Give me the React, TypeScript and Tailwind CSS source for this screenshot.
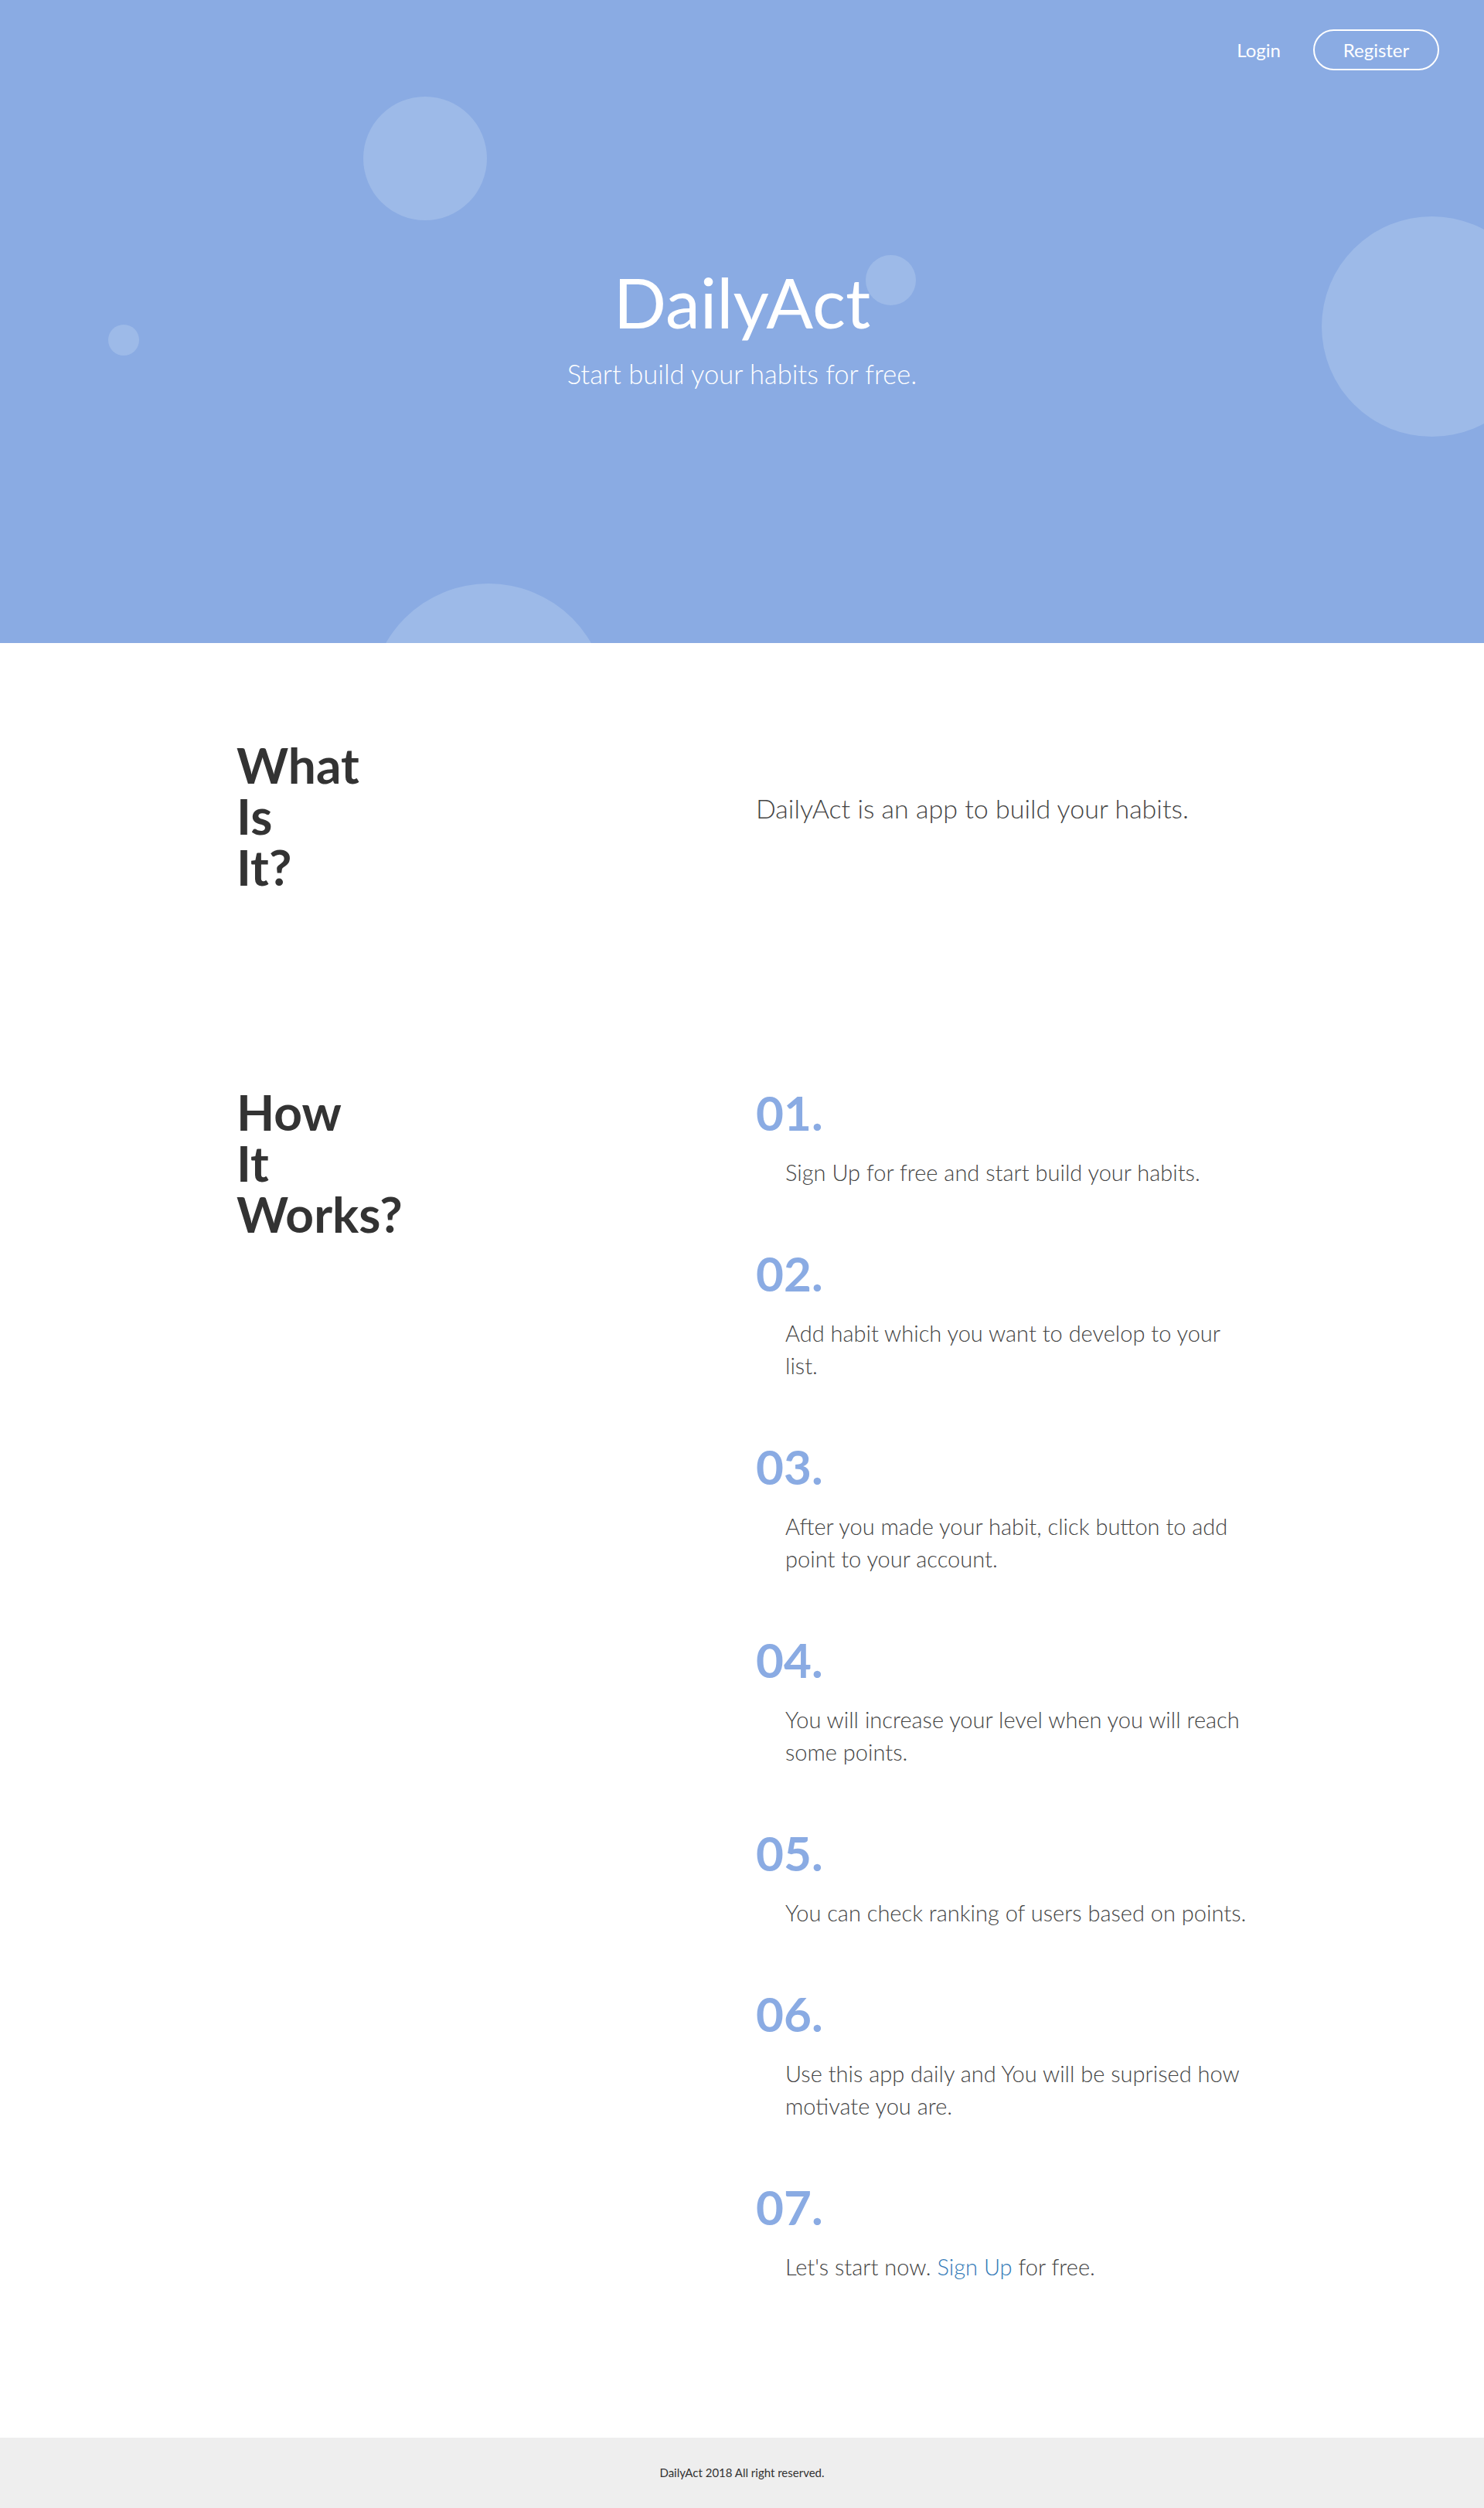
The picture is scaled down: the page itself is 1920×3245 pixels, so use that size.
import React from "react";

const steps = [
  { num: "01.", text: <>Sign Up for free and start build your habits.</> },
  { num: "02.", text: <>Add habit which you want to develop to your list.</> },
  {
    num: "03.",
    text: <>After you made your habit, click button to add point to your account.</>,
  },
  {
    num: "04.",
    text: <>You will increase your level when you will reach some points.</>,
  },
  { num: "05.", text: <>You can check ranking of users based on points.</> },
  {
    num: "06.",
    text: <>Use this app daily and You will be suprised how motivate you are.</>,
  },
  {
    num: "07.",
    text: (
      <>
        Let's start now.{" "}
        <a href="#" className="text-[#337ab7]">
          Sign Up
        </a>{" "}
        for free.
      </>
    ),
  },
];

const App = () => {
  return (
    <div className="font-['Lato',sans-serif] bg-white text-[#333]">
      {/* Hero */}
      <header className="relative h-[832px] overflow-hidden bg-[#8aabe3]">
        {/* bubbles */}
        <div className="absolute left-[470px] top-[125px] w-[160px] h-[160px] rounded-full bg-[#9dbae8]" />
        <div className="absolute left-[140px] top-[420px] w-[40px] h-[40px] rounded-full bg-[#9dbae8]" />
        <div className="absolute left-[1120px] top-[330px] w-[65px] h-[65px] rounded-full bg-[#9dbae8]" />
        <div className="absolute left-[1710px] top-[280px] w-[285px] h-[285px] rounded-full bg-[#9dbae8]" />
        <div className="absolute left-[479px] top-[755px] w-[306px] h-[306px] rounded-full bg-[#9dbae8]" />

        {/* Nav */}
        <nav className="relative flex items-center justify-end gap-[42px] pt-[38px] pr-[58px]">
          <a href="#" className="text-[24px] leading-none text-white">
            Login
          </a>
          <a
            href="#"
            className="flex h-[53px] w-[163px] items-center justify-center rounded-full border-2 border-white text-[24px] leading-none text-white"
          >
            Register
          </a>
        </nav>

        {/* Title */}
        <div className="relative mt-[254px] flex flex-col items-center text-white">
          <h1 className="text-[90px] leading-none font-normal">DailyAct</h1>
          <p className="mt-[32px] text-[34.5px] leading-none font-light">
            Start build your habits for free.
          </p>
        </div>
      </header>

      {/* Main */}
      <main className="mx-auto w-[1328px] pt-[125px] pb-[200px]">
        <section className="flex">
          <h2 className="w-[682px] pl-[10px] text-[64px] leading-[66px] font-bold text-[#333]">
            <span className="block">What</span>
            <span className="block">Is</span>
            <span className="block">It?</span>
          </h2>
          <div className="flex-1 pt-[62px]">
            <p className="text-[34px] leading-[54px] font-light text-[#444]">
              DailyAct is an app to build your habits.
            </p>
          </div>
        </section>

        <section className="mt-[251px] flex">
          <h2 className="w-[682px] pl-[10px] text-[64px] leading-[66px] font-bold text-[#333]">
            <span className="block">How</span>
            <span className="block">It</span>
            <span className="block">Works?</span>
          </h2>
          <ol className="flex flex-1 flex-col gap-[76px]">
            {steps.map((step) => (
              <li key={step.num}>
                <div className="text-[62px] leading-[66px] font-bold text-[#8aabe3]">
                  {step.num}
                </div>
                <p className="mt-[24px] pl-[38px] text-[29px] leading-[42px] font-light text-[#444]">
                  {step.text}
                </p>
              </li>
            ))}
          </ol>
        </section>
      </main>

      {/* Footer */}
      <footer className="flex h-[91px] items-center justify-center bg-[#eeeeee] text-[15px] text-[#333]">
        DailyAct 2018 All right reserved.
      </footer>
    </div>
  );
};

export default App;
